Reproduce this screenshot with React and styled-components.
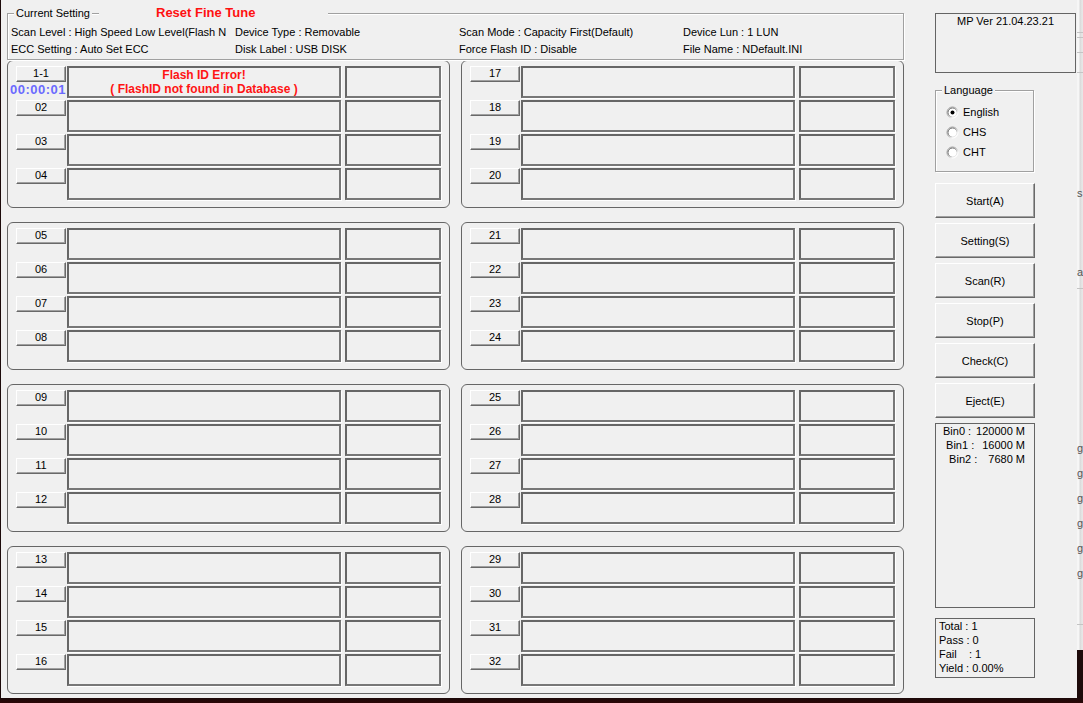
import React from 'react';
import styled, { createGlobalStyle } from 'styled-components';

const GlobalStyle = createGlobalStyle`
  html, body { margin: 0; padding: 0; background: #1a0909; }
  body { font-family: "Liberation Sans", Arial, sans-serif; font-size: 11px; color: #000; }
  * { box-sizing: border-box; }
`;

const Desktop = styled.div`
  display: flex;
  align-items: flex-start;
  width: 1083px;
  height: 703px;
  overflow: hidden;
  padding-left: 1px;
  background: linear-gradient(to bottom, #1c0a0a 0, #1c0a0a 698px, #2c0707 100%);
`;

const Window = styled.div`
  display: flex;
  width: 1076px;
  height: 698px;
  background: #f0f0f0;
  padding-left: 6px;
  flex-shrink: 0;
`;

const Main = styled.div`
  display: flex;
  flex-direction: column;
  width: 897px;
`;

const SettingBox = styled.div`
  position: relative;
  margin-top: 13px;
  height: 47px;
  border: 1px solid #a0a0a0;
  box-shadow: inset 1px 1px 0 #fff, 1px 1px 0 #fff;
  padding: 10px 0 0 3px;
`;

const Legend = styled.span`
  position: absolute;
  top: -7px;
  left: ${p => p.$left}px;
  padding: 0 2px;
  line-height: 13px;
  background: #f0f0f0;
  white-space: nowrap;
`;

const ResetLabel = styled.span`
  position: absolute;
  top: -9px;
  left: 91px;
  width: 229px;
  padding-left: 57px;
  line-height: 16px;
  background: #f0f0f0;
  color: #ff1010;
  font-weight: bold;
  font-size: 13px;
  white-space: nowrap;
`;

const InfoGrid = styled.div`
  display: grid;
  grid-template-columns: 224px 224px 224px 1fr;
  grid-auto-rows: 17px;
  line-height: 17px;
`;

const InfoCell = styled.div`
  white-space: nowrap;
  overflow: hidden;
  max-width: ${p => (p.$clip ? '216px' : 'none')};
`;

const SlotGrid = styled.div`
  display: grid;
  grid-template-columns: 443px 443px;
  column-gap: 11px;
  row-gap: 14px;
  grid-auto-rows: 148px;
`;

const SlotGroup = styled.div`
  border: 1px solid #666;
  border-radius: 6px;
  padding: 5px 0 0 8px;
  display: flex;
  flex-direction: column;
  gap: 2px;
`;

const SlotRow = styled.div`
  display: flex;
  height: 32px;
`;

const LabelCol = styled.div`
  width: 50px;
  display: flex;
  flex-direction: column;
  align-items: flex-end;
`;

const SlotButton = styled.div`
  width: 50px;
  height: 16px;
  background: #f0f0f0;
  border: 1px solid;
  border-color: #fff #696969 #696969 #fff;
  box-shadow: inset -1px -1px 0 #a0a0a0;
  text-align: center;
  line-height: 13px;
`;

const Timer = styled.div`
  white-space: nowrap;
  font-weight: bold;
  font-size: 13px;
  letter-spacing: 0.5px;
  line-height: 15px;
  color: #6a6aff;
`;

const InfoBox = styled.div`
  width: ${p => p.$w}px;
  margin-left: ${p => p.$ml}px;
  height: 32px;
  border: 2px solid;
  border-color: #666 #777 #777 #666;
  box-shadow: 1px 1px 0 #fff;
  text-align: center;
  color: #ff1414;
  font-weight: bold;
  font-size: 12px;
  line-height: 14px;
`;

const Side = styled.div`
  display: flex;
  flex-direction: column;
  margin-left: 31px;
  width: 141px;
`;

const VersionBox = styled.div`
  margin-top: 13px;
  height: 60px;
  border: 1px solid #646464;
  text-align: center;
  line-height: 14px;
`;

const LangGroup = styled.div`
  position: relative;
  margin-top: 17px;
  width: 99px;
  height: 82px;
  border: 1px solid #a0a0a0;
  box-shadow: inset 1px 1px 0 #fff, 1px 1px 0 #fff;
  padding: 11px 0 0 10px;
`;

const RadioRow = styled.div`
  display: flex;
  align-items: center;
  gap: 4px;
  height: 20px;
`;

const ActionList = styled.div`
  display: flex;
  flex-direction: column;
  gap: 5px;
  margin-top: 11px;
`;

const ActionButton = styled.div`
  width: 100px;
  height: 35px;
  display: flex;
  align-items: center;
  justify-content: center;
  background: #f0f0f0;
  border: 1px solid;
  border-color: #fff #696969 #696969 #fff;
  box-shadow: inset -1px -1px 0 #a0a0a0;
`;

const Panel = styled.div`
  width: 100px;
  height: ${p => p.$h}px;
  margin-top: ${p => p.$mt}px;
  border: 1px solid #646464;
  line-height: 14px;
  padding: ${p => p.$pad};
`;

const BinRow = styled.div`
  display: flex;
  justify-content: space-between;
  white-space: pre;
`;

const TotalLine = styled.div`
  white-space: pre;
`;

const Sliver = styled.div`
  width: 6px;
  height: 650px;
  flex-shrink: 0;
  overflow: hidden;
  display: flex;
  flex-direction: column;
  background: linear-gradient(to right, #f6f6f6 0, #f6f6f6 2px, #d8d8d8 3px, #e6e6e6 5px);
  color: #555;
  line-height: 12px;
`;

const SliverLine = styled.div`
  height: 1px;
  background: #c4c4c4;
  margin-top: ${p => p.$mt}px;
`;

const SliverChar = styled.div`
  margin-top: ${p => p.$mt}px;
  height: 12px;
`;

const Radio = ({ checked, id }) => (
  <svg width="13" height="13" viewBox="0 0 13 13">
    <defs>
      <linearGradient id={`ro${id}`} x1="0" y1="0" x2="1" y2="1">
        <stop offset="0" stopColor="#8c8c8c" />
        <stop offset="0.5" stopColor="#a8a8a8" />
        <stop offset="0.75" stopColor="#ffffff" />
        <stop offset="1" stopColor="#ffffff" />
      </linearGradient>
      <linearGradient id={`ri${id}`} x1="0" y1="0" x2="1" y2="1">
        <stop offset="0" stopColor="#5a5a5a" />
        <stop offset="0.5" stopColor="#8a8a8a" />
        <stop offset="0.75" stopColor="#e3e3e3" />
        <stop offset="1" stopColor="#e3e3e3" />
      </linearGradient>
    </defs>
    <circle cx="6.5" cy="6.5" r="5.5" fill="#fff" stroke={`url(#ro${id})`} strokeWidth="1" />
    <circle cx="6.5" cy="6.5" r="4.5" fill="#fff" stroke={`url(#ri${id})`} strokeWidth="1" />
    {checked && <circle cx="6.5" cy="6.5" r="2" fill="#000" />}
  </svg>
);

const info = [
  ['Scan Level : High Speed Low Level(Flash N', 'Device Type : Removable', 'Scan Mode : Capacity First(Default)', 'Device Lun : 1 LUN'],
  ['ECC Setting : Auto Set ECC', 'Disk Label : USB DISK', 'Force Flash ID : Disable', 'File Name : NDefault.INI'],
];

const groups = [];
for (let r = 0; r < 4; r++) {
  for (let c = 0; c < 2; c++) {
    const start = c * 16 + r * 4 + 1;
    groups.push({ key: `${r}-${c}`, ports: [start, start + 1, start + 2, start + 3] });
  }
}

const portLabel = n => (n === 1 ? '1-1' : String(n).padStart(2, '0'));

export default function App() {
  return (
    <>
      <GlobalStyle />
      <Desktop>
        <Window>
          <Main>
            <SettingBox>
              <Legend $left={6}>Current Setting</Legend>
              <ResetLabel>Reset Fine Tune</ResetLabel>
              <InfoGrid>
                {info.flat().map((t, i) => (
                  <InfoCell key={i} $clip={i % 4 === 0}>{t}</InfoCell>
                ))}
              </InfoGrid>
            </SettingBox>
            <SlotGrid>
              {groups.map(g => (
                <SlotGroup key={g.key}>
                  {g.ports.map(p => (
                    <SlotRow key={p}>
                      <LabelCol>
                        <SlotButton>{portLabel(p)}</SlotButton>
                        {p === 1 && <Timer>00:00:01</Timer>}
                      </LabelCol>
                      <InfoBox $w={274} $ml={1}>
                        {p === 1 && (
                          <>
                            <div>Flash ID Error!</div>
                            <div>( FlashID not found in Database )</div>
                          </>
                        )}
                      </InfoBox>
                      <InfoBox $w={96} $ml={4} />
                    </SlotRow>
                  ))}
                </SlotGroup>
              ))}
            </SlotGrid>
          </Main>
          <Side>
            <VersionBox>MP Ver 21.04.23.21</VersionBox>
            <LangGroup>
              <Legend $left={6}>Language</Legend>
              {['English', 'CHS', 'CHT'].map((l, i) => (
                <RadioRow key={l}>
                  <Radio checked={i === 0} id={i} />
                  <span>{l}</span>
                </RadioRow>
              ))}
            </LangGroup>
            <ActionList>
              {['Start(A)', 'Setting(S)', 'Scan(R)', 'Stop(P)', 'Check(C)', 'Eject(E)'].map(b => (
                <ActionButton key={b}>{b}</ActionButton>
              ))}
            </ActionList>
            <Panel $h={185} $mt={5} $pad="0 9px 0 7px">
              <BinRow><span>Bin0 :</span><span>120000 M</span></BinRow>
              <BinRow><span> Bin1 :</span><span>16000 M</span></BinRow>
              <BinRow><span>  Bin2 :</span><span>7680 M</span></BinRow>
            </Panel>
            <Panel $h={60} $mt={10} $pad="0 0 0 3px">
              <TotalLine>Total : 1</TotalLine>
              <TotalLine>Pass : 0</TotalLine>
              <TotalLine>Fail    : 1</TotalLine>
              <TotalLine>Yield : 0.00%</TotalLine>
            </Panel>
          </Side>
        </Window>
        <Sliver>
          <SliverLine $mt={32} />
          <SliverLine $mt={4} />
          <SliverLine $mt={14} />
          <SliverLine $mt={19} />
          <SliverChar $mt={114}>s</SliverChar>
          <SliverChar $mt={67}>a</SliverChar>
          <SliverLine $mt={10} />
          <SliverChar $mt={153}>g</SliverChar>
          <SliverChar $mt={13}>g</SliverChar>
          <SliverChar $mt={13}>g</SliverChar>
          <SliverChar $mt={13}>g</SliverChar>
          <SliverChar $mt={13}>g</SliverChar>
          <SliverChar $mt={13}>g</SliverChar>
          <SliverLine $mt={45} />
        </Sliver>
      </Desktop>
    </>
  );
}
